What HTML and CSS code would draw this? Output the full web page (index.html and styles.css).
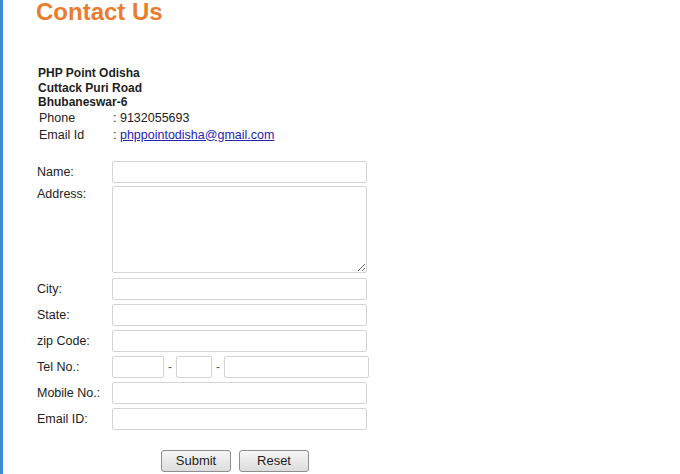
FILE: index.html
```html
<!DOCTYPE html>
<html>
<head>
<meta charset="utf-8">
<title>Contact Us</title>
<link rel="stylesheet" href="styles.css">
</head>
<body>
<div class="page">
  <h1 class="title">Contact Us</h1>
  <div class="address">
    <div>PHP Point Odisha</div>
    <div>Cuttack Puri Road</div>
    <div>Bhubaneswar-6</div>
  </div>
  <table class="info">
    <tr><td class="k">Phone</td><td>: 9132055693</td></tr>
    <tr><td class="k">Email Id</td><td>: <a href="#">phppointodisha@gmail.com</a></td></tr>
  </table>
  <form class="form">
    <label class="lbl">Name:</label>
    <input class="field" type="text">
    <label class="lbl top">Address:</label>
    <textarea class="field area"></textarea>
    <label class="lbl">City:</label>
    <input class="field" type="text">
    <label class="lbl">State:</label>
    <input class="field" type="text">
    <label class="lbl">zip Code:</label>
    <input class="field" type="text">
    <label class="lbl">Tel No.:</label>
    <div class="tel">
      <input class="field t1" type="text"><span class="dash d1">-</span><input class="field t2" type="text"><span class="dash d2">-</span><input class="field t3" type="text">
    </div>
    <label class="lbl">Mobile No.:</label>
    <input class="field" type="text">
    <label class="lbl">Email ID:</label>
    <input class="field" type="text">
    <div class="actions">
      <button type="button" class="btn">Submit</button>
      <button type="reset" class="btn">Reset</button>
    </div>
  </form>
</div>
</body>
</html>
```

FILE: styles.css
```css
html, body {
  margin: 0;
  padding: 0;
  background: #ffffff;
}
body {
  font-family: "Liberation Sans", Arial, sans-serif;
  color: #222222;
}
.page {
  border-left: 3px solid #3a8fd0;
  min-height: 474px;
  box-sizing: border-box;
  padding-left: 34px;
}
.title {
  margin: 0 0 0 -1px;
  padding-top: 1px;
  font-size: 24px;
  line-height: 21px;
  font-weight: bold;
  color: #e97d2e;
}
.address {
  margin-top: 44px;
  margin-left: 1px;
  font-size: 12px;
  line-height: 14.5px;
  font-weight: bold;
  color: #1e1e1e;
}
.info {
  border-collapse: collapse;
  font-size: 12.5px;
  line-height: 17px;
  color: #222;
}
.info td {
  padding: 0;
}
.info td.k {
  width: 74px;
  padding-left: 2px;
}
.info a {
  color: #2525b0;
  text-decoration: underline;
}
.form {
  margin-top: 17px;
  display: grid;
  grid-template-columns: 75px auto;
  justify-content: start;
  row-gap: 4px;
  align-items: center;
  font-size: 12.5px;
  color: #222;
}
.lbl {
  line-height: 15px;
  padding-top: 2px;
}
.lbl.top {
  align-self: start;
  padding-top: 0;
}
.field {
  box-sizing: border-box;
  width: 255px;
  height: 22px;
  margin: 0;
  border: 1px solid #d4d4d4;
  border-radius: 2px;
  background: #fff;
  font-family: "Liberation Sans", Arial, sans-serif;
  font-size: 12.5px;
  padding: 2px 3px;
  outline: none;
}
.area {
  height: 87px;
  margin-top: -1px;
  margin-bottom: 1px;
  resize: both;
}
.tel {
  display: flex;
  align-items: center;
}
.tel .t1 { width: 52px; }
.tel .t2 { width: 36px; }
.tel .t3 { width: 145px; }
.dash {
  color: #555;
  font-size: 12px;
}
.d1 { margin: 0 4px 0 4px; }
.d2 { margin: 0 4px 0 4px; }
.actions {
  grid-column: 2;
  margin-top: 16px;
  padding-left: 49px;
  display: flex;
  gap: 8px;
}
.btn {
  width: 70px;
  height: 22px;
  box-sizing: border-box;
  border: 1px solid #8e8e8e;
  border-radius: 3px;
  background: linear-gradient(#f6f6f6, #dddddd);
  font-family: "Liberation Sans", Arial, sans-serif;
  font-size: 13px;
  color: #1e1e1e;
  padding: 0;
}
```
